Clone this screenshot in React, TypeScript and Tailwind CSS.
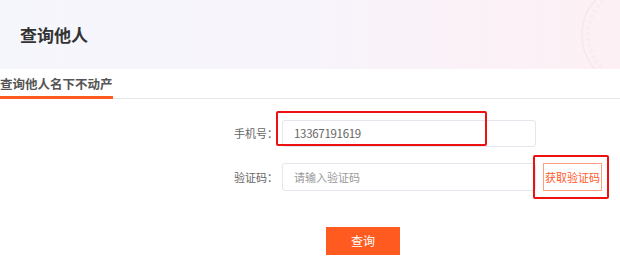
export default function App() {
  return (
    <div className="relative h-[272px] w-[620px] overflow-hidden bg-white font-['Noto_Sans_CJK_SC',sans-serif]">
      <div className="relative flex h-[69px] items-center overflow-hidden bg-gradient-to-r from-[#f5f6fc] via-[#f8f4fb] to-[#fdf0f4] px-5">
        <h1 className="text-[17px] font-bold text-[#333]">查询他人</h1>
        <svg className="absolute right-[-84px] top-[-15px]" width="130" height="100" viewBox="0 0 130 100">
          <circle cx="60" cy="50" r="52" fill="none" stroke="#f9e6eb" strokeWidth="1.5" />
          <circle cx="60" cy="50" r="46" fill="none" stroke="#faebef" strokeWidth="4" strokeDasharray="3 3" />
        </svg>
      </div>

      <div className="flex h-[30px] items-end border-b border-[#e6e6e6]">
        <span className="-mb-px border-b-[3px] border-[#ff5a1f] pb-[3px] text-[12.5px] font-bold leading-[18px] text-[#555]">
          查询他人名下不动产
        </span>
      </div>

      <div className="relative pt-[21px]">
        <div className="flex items-center">
          <label className="w-[282px] pr-[4px] text-right text-[11px] text-[#666]">手机号：</label>
          <div className="flex h-[27px] w-[254px] items-center rounded-[3px] border border-[#e4e6ee] pl-[11px] text-[11.5px] tracking-[-0.3px] text-[#666]">
            13367191619
          </div>
        </div>

        <div className="mt-4 flex items-center">
          <label className="w-[282px] pr-[4px] text-right text-[11px] text-[#666]">验证码：</label>
          <div className="flex h-[28px] w-[254px] items-center rounded-[3px] border border-[#e4e6ee] pl-[11px] text-[11px] text-[#999]">
            请输入验证码
          </div>
          <button className="ml-[7px] flex h-[28px] w-[59px] items-center justify-center whitespace-nowrap border border-[#ff9f82] px-0 text-[11px] text-[#ff5a2a]">
            获取验证码
          </button>
        </div>

        <div className="mt-9 pl-[326px]">
          <button className="h-[28px] w-[74px] bg-[#ff5a1f] text-[12px] text-white">查询</button>
        </div>

        <div className="absolute left-[276px] top-[12px] h-[35px] w-[211px] rounded-[2px] border-2 border-[#ee1111]" />
        <div className="absolute left-[533px] top-[56px] h-[44px] w-[76px] rounded-[2px] border-2 border-[#ee1111]" />
      </div>
    </div>
  );
}
